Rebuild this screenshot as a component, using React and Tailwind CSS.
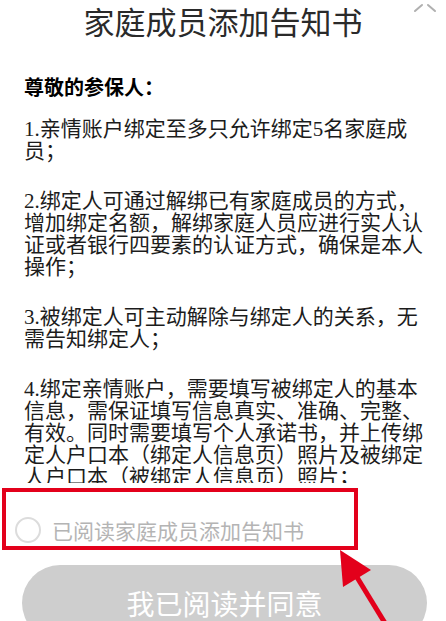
const paragraphs = [
  "1.亲情账户绑定至多只允许绑定5名家庭成员；",
  "2.绑定人可通过解绑已有家庭成员的方式，增加绑定名额，解绑家庭人员应进行实人认证或者银行四要素的认证方式，确保是本人操作；",
  "3.被绑定人可主动解除与绑定人的关系，无需告知绑定人；",
  "4.绑定亲情账户，需要填写被绑定人的基本信息，需保证填写信息真实、准确、完整、有效。同时需要填写个人承诺书，并上传绑定人户口本（绑定人信息页）照片及被绑定人户口本（被绑定人信息页）照片；",
];

export default function App() {
  return (
    <div className="relative flex h-[621px] w-[446px] flex-col overflow-hidden bg-white font-['Liberation_Serif','Noto_Sans_CJK_SC',serif]">
      {/* header */}
      <div className="relative h-[44px] shrink-0">
        <h1 className="text-center font-['Noto_Sans_CJK_SC',sans-serif] text-[31px] leading-[42px] text-[#2a2a2a]">
          家庭成员添加告知书
        </h1>
        <svg className="absolute right-[8px] top-0" width="26" height="14" viewBox="0 0 26 14">
          <path d="M3 11 L10 5 M16 5 L23 11" stroke="#b0b0b0" strokeWidth="2" fill="none" strokeLinecap="round" />
        </svg>
      </div>

      {/* scrolling content */}
      <div className="h-[439px] shrink-0 overflow-hidden pt-[32px]">
        <div className="ml-[24px] w-[402px] text-[21px] leading-[22px] text-[#1c1c1c]">
          <p className="font-['Noto_Sans_CJK_SC',sans-serif] text-[20px] font-bold text-black">尊敬的参保人：</p>
          {paragraphs.map((t, i) => (
            <p key={t} className={i === 0 ? "mt-[20px]" : "mt-[28px]"}>
              {t}
            </p>
          ))}
        </div>
      </div>

      {/* footer */}
      <div className="relative shrink-0">
        <div className="flex items-center gap-[11px] pl-[15px] pt-[34px]">
          <span className="h-[26px] w-[26px] rounded-full border-2 border-[#dcdcdc]" />
          <span className="font-['Noto_Sans_CJK_SC',sans-serif] text-[21px] leading-[26px] text-[#b4b4b4]">
            已阅读家庭成员添加告知书
          </span>
        </div>
        <button className="ml-[22px] mt-[22px] flex h-[76px] w-[405px] items-center justify-center rounded-full bg-[#cecece] font-['Noto_Sans_CJK_SC',sans-serif] text-[28px] text-white">
          我已阅读并同意
        </button>

        {/* annotation box */}
        <div className="absolute left-[2px] top-[5px] h-[62px] w-[356px] border-4 border-[#e3001b]" />
      </div>

      {/* annotation arrow */}
      <svg className="absolute left-0 top-0" width="446" height="621" viewBox="0 0 446 621">
        <line x1="388" y1="628" x2="355" y2="574" stroke="#e3001b" strokeWidth="5" />
        <polygon points="340,550 343,587 371,570" fill="#e3001b" />
      </svg>
    </div>
  );
}
